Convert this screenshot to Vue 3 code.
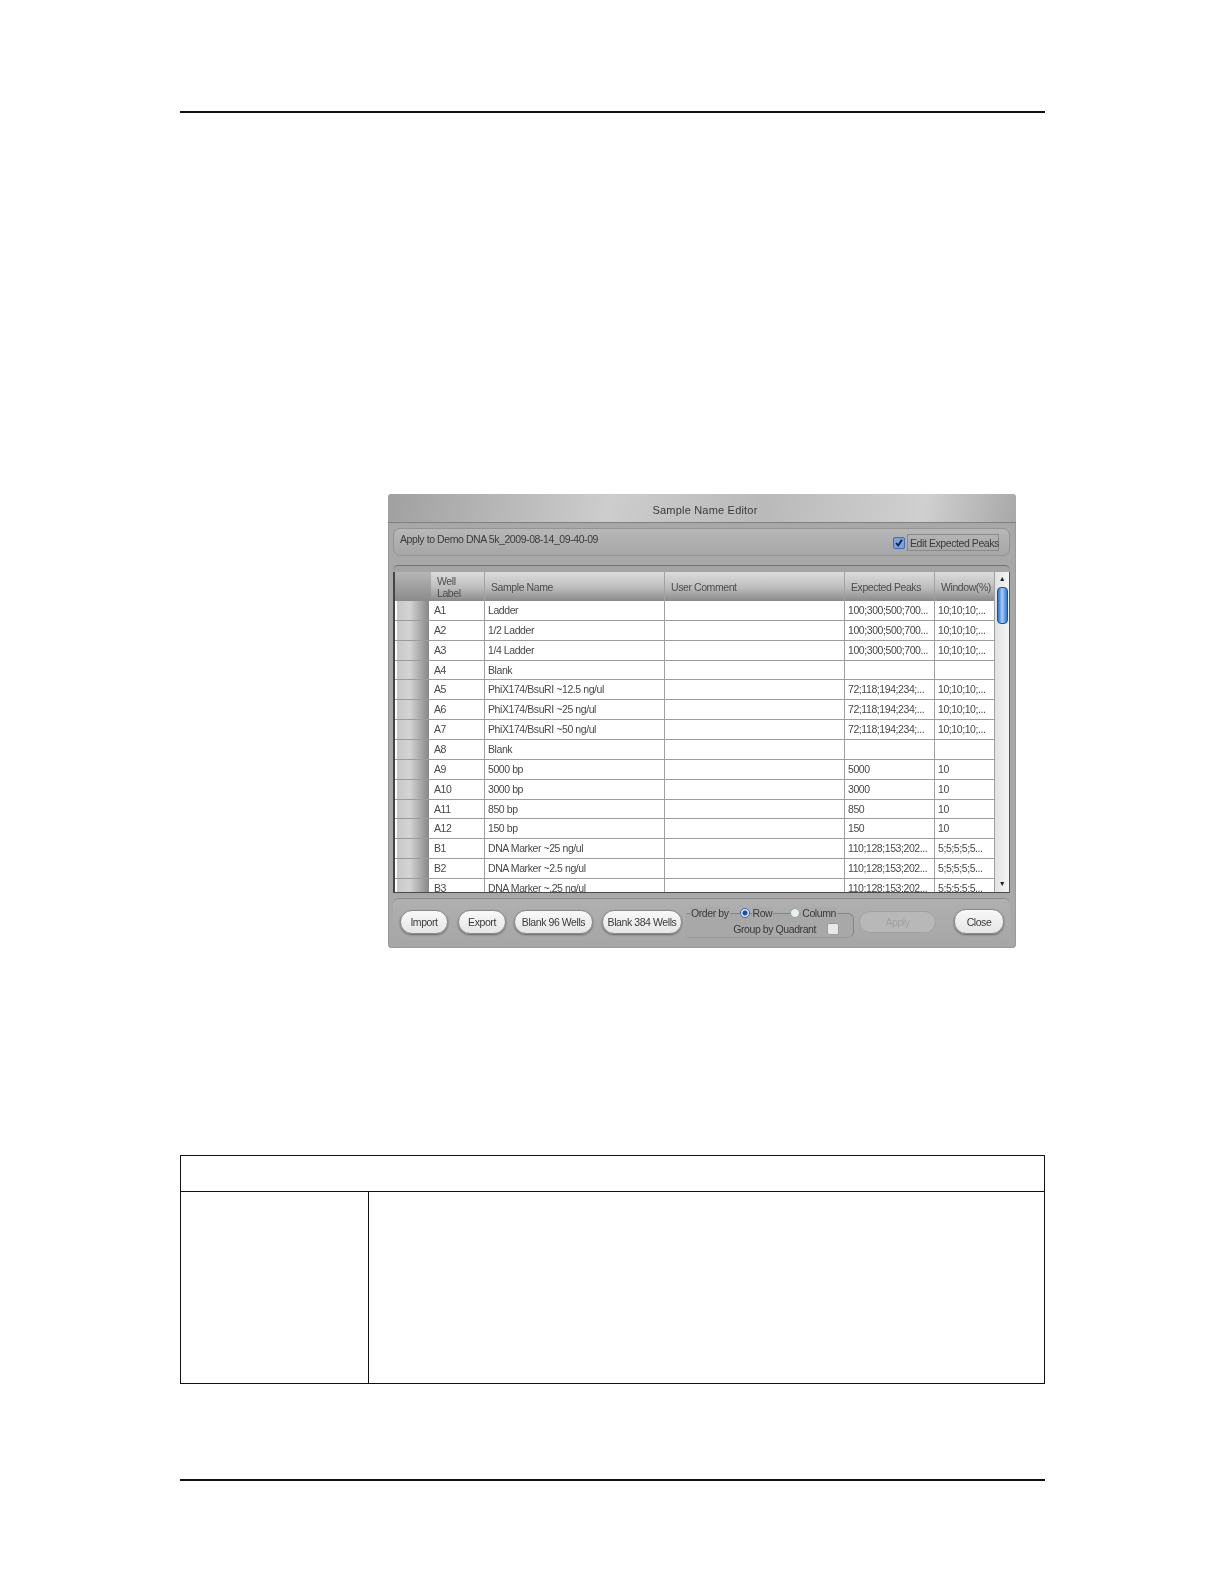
<script setup>
const peaks1 = '100;300;500;700...'
const peaks2 = '72;118;194;234;...'
const peaks3 = '110;128;153;202...'
const rows = [
  ['A1', 'Ladder', peaks1, '10;10;10;...'],
  ['A2', '1/2 Ladder', peaks1, '10;10;10;...'],
  ['A3', '1/4 Ladder', peaks1, '10;10;10;...'],
  ['A4', 'Blank', '', ''],
  ['A5', 'PhiX174/BsuRI ~12.5 ng/ul', peaks2, '10;10;10;...'],
  ['A6', 'PhiX174/BsuRI ~25 ng/ul', peaks2, '10;10;10;...'],
  ['A7', 'PhiX174/BsuRI ~50 ng/ul', peaks2, '10;10;10;...'],
  ['A8', 'Blank', '', ''],
  ['A9', '5000 bp', '5000', '10'],
  ['A10', '3000 bp', '3000', '10'],
  ['A11', '850 bp', '850', '10'],
  ['A12', '150 bp', '150', '10'],
  ['B1', 'DNA Marker ~25 ng/ul', peaks3, '5;5;5;5;5...'],
  ['B2', 'DNA Marker ~2.5 ng/ul', peaks3, '5;5;5;5;5...'],
  ['B3', 'DNA Marker ~.25 ng/ul', peaks3, '5;5;5;5;5...']
]
</script>

<template>
  <div class="page">
    <div class="rule"></div>

    <div class="window">
      <div class="title-bar">Sample Name Editor</div>

      <div class="top-panel">
        <span>Apply to Demo DNA 5k_2009-08-14_09-40-09</span>
        <label class="edit-peaks">
          <span class="checkbox checked">
            <svg viewBox="0 0 12 12" width="10" height="10">
              <path d="M2.5 6l2.5 3 4.5-7" fill="none" stroke="#10204a" stroke-width="2.2" />
            </svg>
          </span>
          <span class="edit-text">Edit Expected Peaks</span>
        </label>
      </div>

      <div class="grid-rim">
        <div class="grid-box">
          <div class="grid-main">
            <div class="row head">
              <div class="corner"></div>
              <div class="cell well-head">Well<br />Label</div>
              <div class="cell">Sample Name</div>
              <div class="cell">User Comment</div>
              <div class="cell">Expected Peaks</div>
              <div class="cell">Window(%)</div>
            </div>
            <div class="body">
              <div v-for="r in rows" :key="r[0]" class="row data">
                <div class="row-head"></div>
                <div class="cell">{{ r[0] }}</div>
                <div class="cell">{{ r[1] }}</div>
                <div class="cell"></div>
                <div class="cell">{{ r[2] }}</div>
                <div class="cell">{{ r[3] }}</div>
              </div>
            </div>
          </div>
          <div class="scrollbar">
            <span class="arrow">▲</span>
            <div class="thumb"></div>
            <div class="track"></div>
            <span class="arrow">▼</span>
          </div>
        </div>
      </div>

      <div class="bottom-panel">
        <button class="btn import">Import</button>
        <button class="btn export">Export</button>
        <button class="btn blank96">Blank 96 Wells</button>
        <button class="btn blank384">Blank 384 Wells</button>
        <div class="order-box">
          <div class="order-line">
            <span class="legend">Order by</span>
            <span class="radio on"></span>
            <span class="legend row-label">Row</span>
            <span class="radio second"></span>
            <span class="legend col-label">Column</span>
          </div>
          <div class="quadrant">
            <span>Group by Quadrant</span>
            <span class="checkbox"></span>
          </div>
        </div>
        <button class="btn apply">Apply</button>
        <button class="btn close">Close</button>
      </div>
    </div>

    <div class="info-table">
      <div class="info-head"></div>
      <div class="info-body">
        <div class="info-left"></div>
        <div class="info-right"></div>
      </div>
    </div>

    <div class="rule bottom-rule"></div>
  </div>
</template>

<style scoped>
.page {
  width: 1224px;
  height: 1584px;
  padding: 111px 179px 0 180px;
  box-sizing: border-box;
  background: #fff;
  font-family: "Liberation Sans", Arial, sans-serif;
  overflow: hidden;
}
.rule {
  height: 2px;
  background: #111;
}
.window {
  width: 628px;
  height: 454px;
  margin: 381px 0 0 208px;
  display: flex;
  flex-direction: column;
  padding: 0 6px 0 5px;
  box-sizing: border-box;
  border-radius: 4px;
  background: #a8a8a8;
  color: #3a3a3a;
  font-size: 10.5px;
  letter-spacing: -0.42px;
  filter: blur(0.6px);
  box-shadow: inset 0 0 2px #777;
}
.title-bar {
  height: 28px;
  margin: 0 -6px 0 -5px;
  padding: 3px 0 0 6px;
  box-sizing: content-box;
  height: 25px;
  flex: none;
  display: flex;
  align-items: center;
  justify-content: center;
  border-radius: 4px 4px 0 0;
  border-bottom: 1px solid #808080;
  background: linear-gradient(100deg, #a0a0a0, #cdcdcd 35%, #bababa 60%, #d0d0d0 85%, #a8a8a8);
  font-size: 11px;
  letter-spacing: 0.2px;
}
.top-panel {
  height: 28px;
  flex: none;
  margin-top: 5px;
  display: flex;
  justify-content: space-between;
  padding: 4px 10px 0 6px;
  box-sizing: border-box;
  border: 1px solid #949494;
  border-radius: 7px;
  background: linear-gradient(#b8b8b8, #a6a6a6);
}
.edit-peaks {
  display: flex;
  align-items: flex-start;
  gap: 2px;
  height: 17px;
  margin-top: 1px;
}
.edit-text {
  width: 92px;
  height: 17px;
  padding: 2px 0 0 2px;
  box-sizing: border-box;
  white-space: nowrap;
  border: 1px solid #8a8a8a;
}
.checkbox {
  width: 10px;
  height: 10px;
  flex: none;
  display: block;
  border: 1px solid #9a9aa5;
  border-radius: 2px;
  background: #e8e8e8;
}
.checkbox.checked {
  margin-top: 3px;
  background: #7aa3d8;
  border-color: #3f6fb0;
}
.checkbox svg {
  display: block;
}
.grid-rim {
  height: 328px;
  flex: none;
  margin-top: 9px;
  padding-top: 6px;
  box-sizing: border-box;
  border-top: 1px solid #707070;
  border-radius: 5px 5px 0 0;
  background: #a4a4a4;
}
.grid-box {
  height: 321px;
  display: flex;
  box-sizing: border-box;
  border-left: 2px solid #444;
  border-bottom: 1px solid #4a4a4a;
  border-right: 1px solid #555;
  background: #fff;
  overflow: hidden;
}
.grid-main {
  width: 600px;
  flex: none;
  display: flex;
  flex-direction: column;
  min-height: 0;
}
.row {
  display: grid;
  grid-template-columns: 36px 54px 180px 180px 90px 60px;
}
.head {
  height: 29px;
  flex: none;
  background: linear-gradient(#dcdcdc, #bcbcbc 55%, #8a8a8a);
  color: #4c4c4c;
}
.corner {
  background: linear-gradient(#b6b6b6, #8a8a8a);
}
.head .cell {
  border-right: 1px solid #a2a2a2;
  padding-left: 6px;
  display: flex;
  align-items: center;
  line-height: 12px;
}
.head .well-head {
  display: block;
  padding-top: 3px;
}
.body {
  flex: 1;
  overflow: hidden;
}
.data {
  height: 19.87px;
  box-sizing: border-box;
  border-bottom: 1px solid #9c9c9c;
}
.row-head {
  margin-left: 2px;
  background: linear-gradient(90deg, #c8c8c8, #d4d4d4 40%, #868686);
  border-right: 2px solid #fff;
}
.data .cell {
  padding-left: 3px;
  border-right: 1px solid #a0a0a0;
  line-height: 19px;
  white-space: nowrap;
  overflow: hidden;
  color: #484848;
}
.scrollbar {
  flex: 1;
  display: flex;
  flex-direction: column;
  align-items: center;
  background: linear-gradient(90deg, #e2e2e2, #f4f4f4);
  color: #222;
}
.arrow {
  height: 15px;
  font-size: 7px;
  line-height: 14px;
}
.thumb {
  width: 11px;
  height: 37px;
  flex: none;
  border: 1px solid #20509a;
  border-radius: 4px;
  box-sizing: border-box;
  background: linear-gradient(90deg, #2a6fd0, #a9cdf5 45%, #2f78d8);
}
.track {
  flex: 1;
}
.bottom-panel {
  height: 47px;
  flex: none;
  margin-top: 5px;
  display: flex;
  align-items: flex-start;
  padding: 11px 0 0 7px;
  box-sizing: border-box;
  border-top: 1px solid #8a8a8a;
  border-radius: 6px;
  background: linear-gradient(#b0b0b0, #a6a6a6);
}
.btn {
  height: 24px;
  flex: none;
  padding: 0;
  border: 1px solid #8a8a8a;
  border-radius: 12px;
  background: linear-gradient(#f8f8f8, #e6e6e6);
  box-shadow: 0 1px 2px #666;
  color: #3a3a3a;
  font: inherit;
  letter-spacing: inherit;
  white-space: nowrap;
}
.import {
  width: 48px;
}
.export {
  width: 48px;
  margin-left: 10px;
}
.blank96 {
  width: 79px;
  margin-left: 8px;
}
.blank384 {
  width: 80px;
  margin-left: 9px;
}
.apply {
  width: 77px;
  height: 22px;
  margin: 1px 0 0 5px;
  border-color: #a2a2a2;
  background: #b8b8b8;
  box-shadow: none;
  color: #a2a2a2;
}
.close {
  width: 50px;
  height: 25px;
  margin: -1px 0 0 18px;
}
.order-box {
  width: 168px;
  height: 25px;
  margin: 3px 0 0 4px;
  flex: none;
  box-sizing: border-box;
  border: 1px solid #868686;
  border-left-color: #a6a6a6;
  border-bottom-color: #9a9a9a;
  border-radius: 0 6px 6px 0;
  background: #a8a8a8;
}
.order-line {
  display: flex;
  align-items: center;
  height: 12px;
  margin-top: -7px;
  padding-left: 3px;
}
.legend {
  background: #aaa;
  padding: 0 1px;
  white-space: nowrap;
}
.row-label {
  margin-left: 2px;
}
.col-label {
  margin-left: 1px;
}
.radio {
  width: 8px;
  height: 8px;
  flex: none;
  margin-left: 10px;
  border: 1px solid #8aa0a8;
  border-radius: 50%;
  background: #eee;
}
.radio.second {
  margin-left: 17px;
}
.radio.on {
  border-color: #3f6fb0;
  background: radial-gradient(circle, #1d4f9c 0 2px, #d8e4f4 3px);
}
.quadrant {
  display: flex;
  align-items: center;
  justify-content: flex-end;
  gap: 11px;
  margin-top: 4px;
  padding-right: 14px;
}
.info-table {
  height: 229px;
  margin-top: 207px;
  box-sizing: border-box;
  border: 1px solid #111;
  display: flex;
  flex-direction: column;
}
.info-head {
  height: 35px;
  flex: none;
  border-bottom: 1px solid #111;
}
.info-body {
  flex: 1;
  display: flex;
}
.info-left {
  width: 187px;
  border-right: 1px solid #111;
}
.info-right {
  flex: 1;
}
.bottom-rule {
  margin-top: 95px;
}
</style>
